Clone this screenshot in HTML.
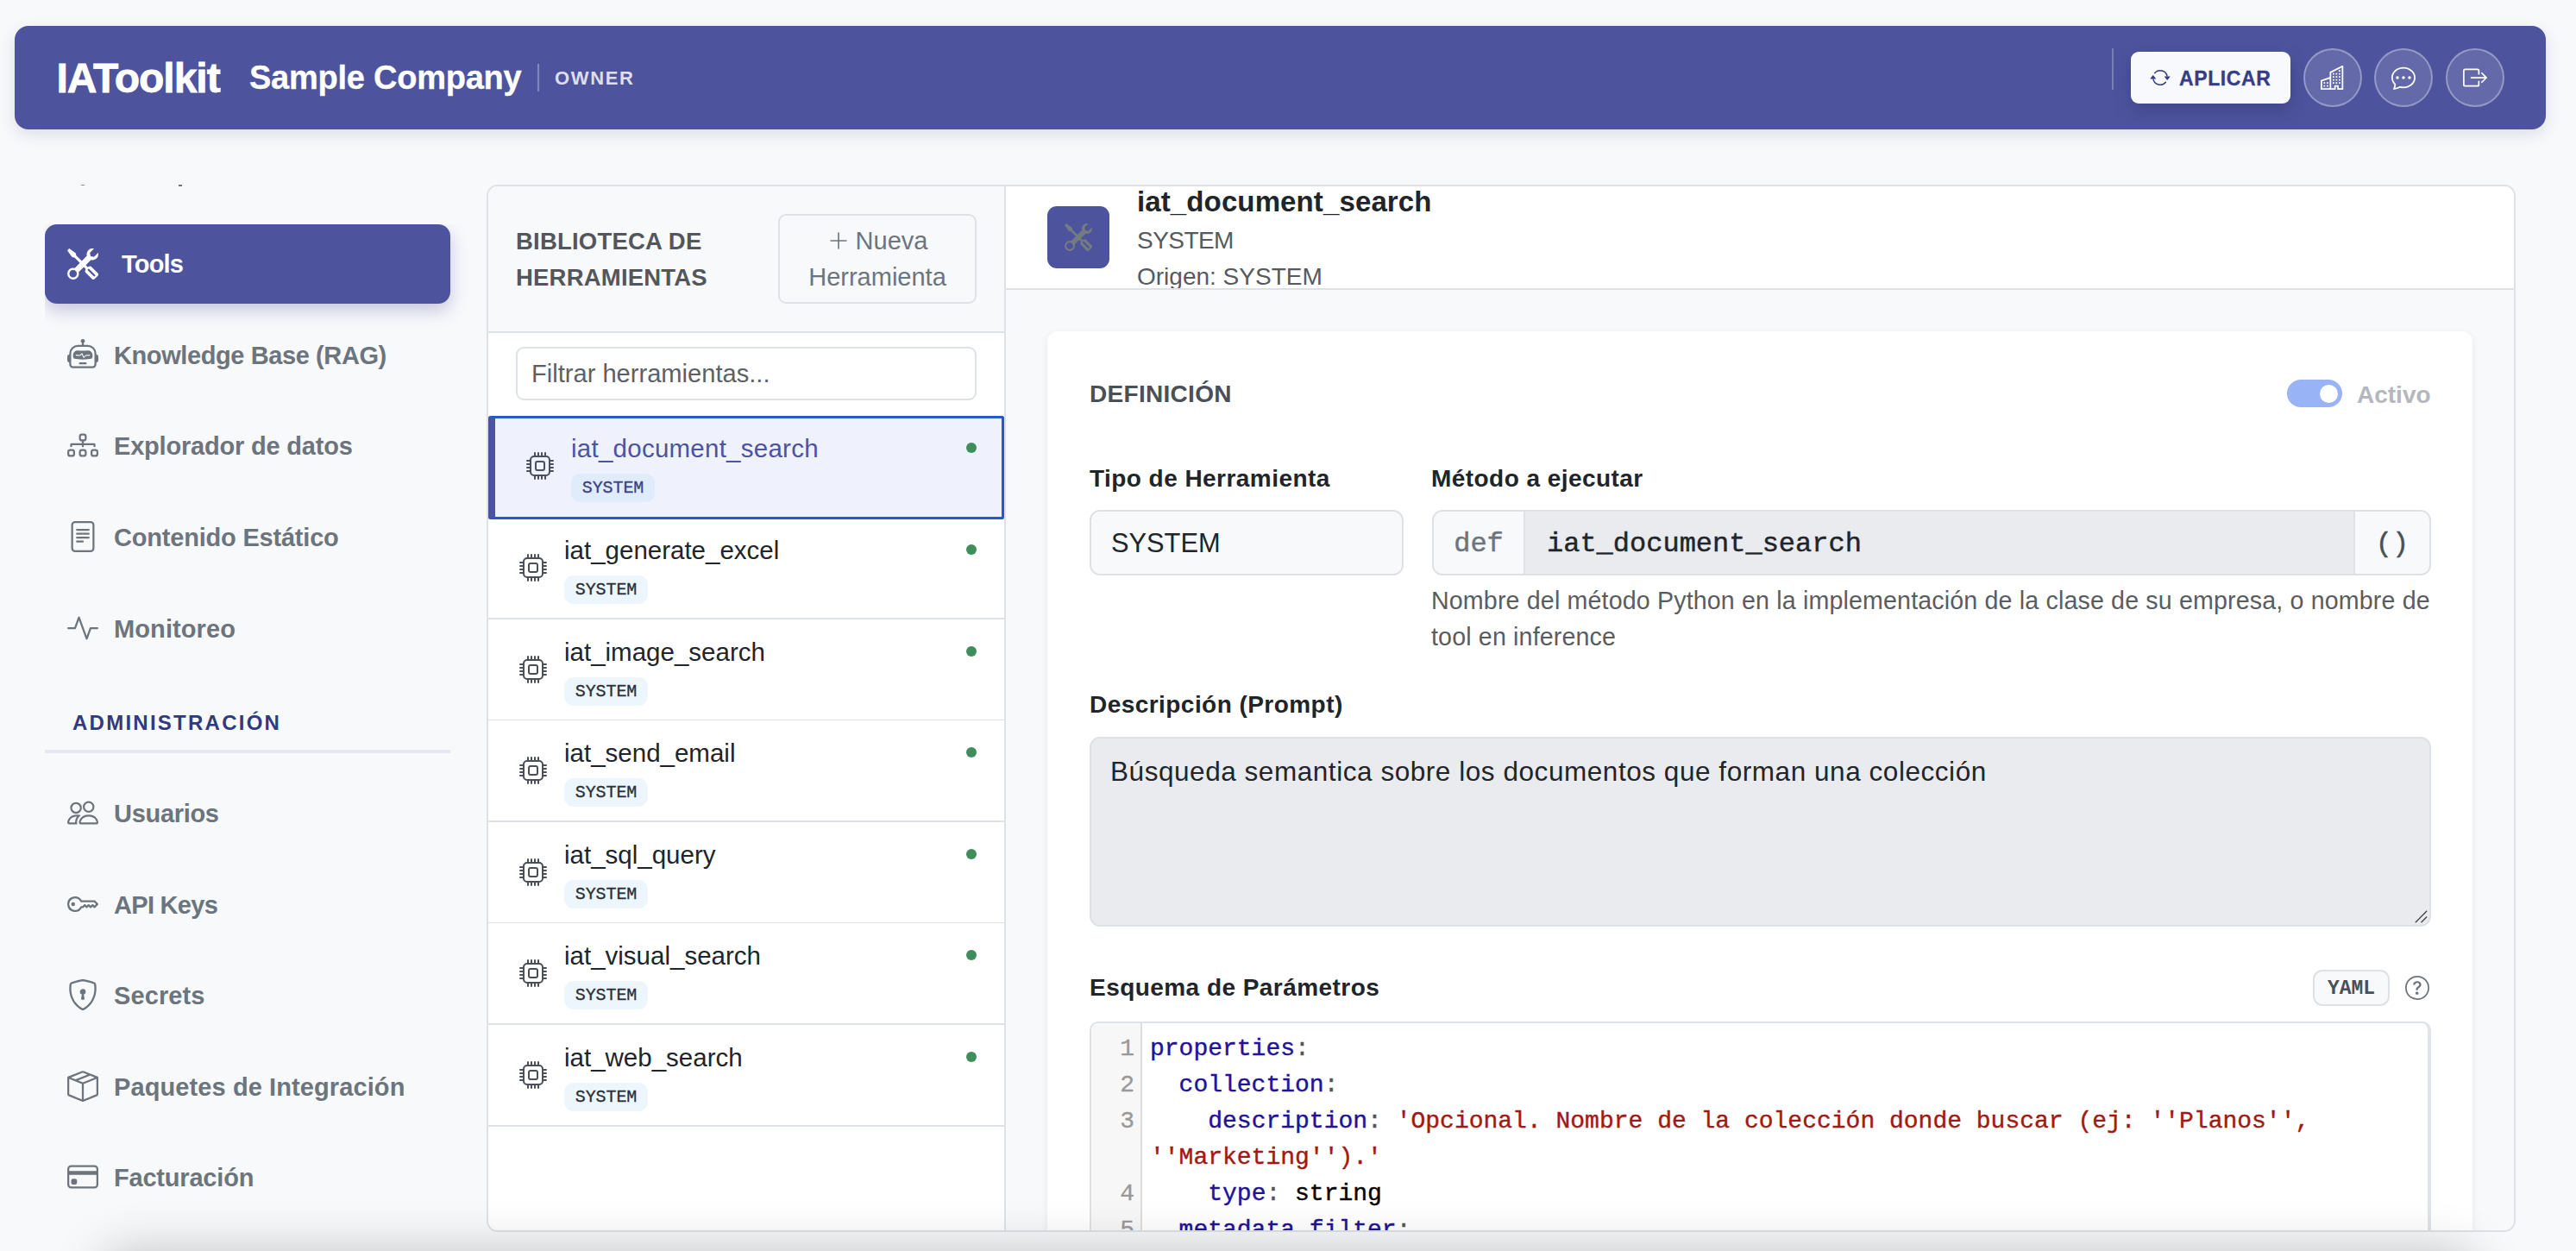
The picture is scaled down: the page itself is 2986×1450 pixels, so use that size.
<!DOCTYPE html>
<html lang="es">
<head>
<meta charset="utf-8">
<title>IAToolkit - Tools</title>
<style>
*{box-sizing:border-box;margin:0;padding:0}
html,body{width:2986px;height:1450px;overflow:hidden}
body{background:#f8f9fb;font-family:"Liberation Sans",sans-serif;color:#212529;position:relative}
.abs{position:absolute}
svg{display:block}
.mono{font-family:"Liberation Mono",monospace;-webkit-text-stroke:.45px currentColor}

/* ---------- top header ---------- */
#hdr{position:absolute;left:17px;top:30px;width:2934px;height:120px;background:#4d549d;border-radius:16px;box-shadow:0 6px 18px rgba(40,46,110,.13)}
#brand{position:absolute;left:65.5px;top:61px;font-size:48px;font-weight:700;color:#fff;line-height:60px;letter-spacing:-1px;-webkit-text-stroke:.8px #fff;white-space:nowrap}
#company{position:absolute;left:289px;top:60px;font-size:38px;font-weight:700;color:#fff;-webkit-text-stroke:.3px #fff;line-height:60px;letter-spacing:-.25px;white-space:nowrap}
#hdiv1{position:absolute;left:623px;top:74px;width:2px;height:32px;background:rgba(255,255,255,.3)}
#role{position:absolute;left:643px;top:60px;font-size:22px;font-weight:700;color:rgba(255,255,255,.82);line-height:62px;letter-spacing:1.65px;white-space:nowrap}
#hdiv2{position:absolute;left:2448px;top:56px;width:2px;height:48px;background:rgba(255,255,255,.25)}
#apply{position:absolute;left:2470px;top:60px;width:185px;height:60px;background:#f8f9fc;border-radius:9px;box-shadow:0 8px 20px rgba(30,35,90,.28)}
#apply svg{position:absolute;left:22px;top:18px;width:24px;height:24px;fill:#353d86}
#apply span{position:absolute;left:56px;top:1px;line-height:60px;font-size:23px;font-weight:700;color:#353d86;-webkit-text-stroke:.3px #353d86;letter-spacing:.6px}
.circ{position:absolute;top:56px;width:68px;height:68px;border-radius:50%;background:rgba(255,255,255,.13);border:2px solid rgba(255,255,255,.32)}
.circ svg{position:absolute;left:18px;top:18px;width:28px;height:28px;fill:#fff}

/* ---------- sidebar ---------- */
.nav{position:absolute;left:52px;width:470px;height:92px;border-radius:14px;color:#6c757d;font-weight:700;font-size:29px;white-space:nowrap}
.nav svg{position:absolute;left:26px;top:28px;width:36px;height:36px;fill:#6c757d}
.nav span{position:absolute;left:80px;top:1px;line-height:92px;letter-spacing:.1px}
.nav.on{background:#4d549d;color:#fff;box-shadow:0 8px 20px rgba(77,84,157,.3);clip-path:inset(0 -50px -50px 0)}
.nav.on svg{fill:#fff;left:26px;top:28px;width:36px;height:36px}
.nav.on span{left:89px;top:0}
#admin{position:absolute;left:84px;top:820px;font-size:24px;font-weight:700;color:#2f3a80;letter-spacing:2.25px;line-height:36px}
#adminline{position:absolute;left:52px;top:869px;width:470px;height:4px;background:#e6e8f1}
</style>
</head>
<body>

<!-- ======= HEADER ======= -->
<div id="hdr"></div>
<div id="brand">IAToolkit</div>
<div id="company">Sample Company</div>
<div id="hdiv1"></div>
<div id="role">OWNER</div>
<div id="hdiv2"></div>
<div id="apply">
  <svg viewBox="0 0 16 16"><path d="M11.534 7h3.932a.25.25 0 0 1 .192.41l-1.966 2.36a.25.25 0 0 1-.384 0l-1.966-2.36a.25.25 0 0 1 .192-.41m-11 2h3.932a.25.25 0 0 0 .192-.41L2.692 6.23a.25.25 0 0 0-.384 0L.342 8.59A.25.25 0 0 0 .534 9"/><path fill-rule="evenodd" d="M8 3c-1.552 0-2.94.707-3.857 1.818a.5.5 0 1 1-.771-.636A6.002 6.002 0 0 1 13.917 7H12.9A5 5 0 0 0 8 3M3.1 9a5.002 5.002 0 0 0 8.757 2.182.5.5 0 1 1 .771.636A6.002 6.002 0 0 1 2.083 9z"/></svg>
  <span>APLICAR</span>
</div>
<div class="circ" style="left:2670px"><svg viewBox="0 0 16 16"><path d="M14.763.075A.5.5 0 0 1 15 .5v15a.5.5 0 0 1-.5.5h-3a.5.5 0 0 1-.5-.5V14h-1v1.5a.5.5 0 0 1-.5.5h-9a.5.5 0 0 1-.5-.5V10a.5.5 0 0 1 .342-.474L6 7.64V4.5a.5.5 0 0 1 .276-.447l8-4a.5.5 0 0 1 .487.022M6 8.694 1 10.36V15h5zM7 15h2v-1.5a.5.5 0 0 1 .5-.5h2a.5.5 0 0 1 .5.5V15h2V1.309l-7 3.5z"/><path d="M2 11h1v1H2zm2 0h1v1H4zm-2 2h1v1H2zm2 0h1v1H4zm4-4h1v1H8zm2 0h1v1h-1zm-2 2h1v1H8zm2 0h1v1h-1zm2-2h1v1h-1zm0 2h1v1h-1zM8 7h1v1H8zm2 0h1v1h-1zm2 0h1v1h-1zM8 5h1v1H8zm2 0h1v1h-1zm2 0h1v1h-1zm0-2h1v1h-1z"/></svg></div>
<div class="circ" style="left:2752px"><svg viewBox="0 0 16 16"><path d="M5 8a1 1 0 1 1-2 0 1 1 0 0 1 2 0m4 0a1 1 0 1 1-2 0 1 1 0 0 1 2 0m3 1a1 1 0 1 0 0-2 1 1 0 0 0 0 2"/><path d="m2.165 15.803.02-.004c1.83-.363 2.948-.842 3.468-1.105A9 9 0 0 0 8 15c4.418 0 8-3.134 8-7s-3.582-7-8-7-8 3.134-8 7c0 1.76.743 3.37 1.97 4.6a10.4 10.4 0 0 1-.524 2.318l-.003.011a11 11 0 0 1-.244.637c-.079.186.074.394.273.362a22 22 0 0 0 .693-.125m.8-3.108a1 1 0 0 0-.287-.801C1.618 10.83 1 9.468 1 8c0-3.192 3.004-6 7-6s7 2.808 7 6-3.004 6-7 6a8 8 0 0 1-2.088-.272 1 1 0 0 0-.711.074c-.387.196-1.24.57-2.634.893a11 11 0 0 0 .398-2"/></svg></div>
<div class="circ" style="left:2835px"><svg viewBox="0 0 16 16"><path fill-rule="evenodd" d="M10 12.5a.5.5 0 0 1-.5.5h-8a.5.5 0 0 1-.5-.5v-9a.5.5 0 0 1 .5-.5h8a.5.5 0 0 1 .5.5v2a.5.5 0 0 0 1 0v-2A1.5 1.5 0 0 0 9.5 2h-8A1.5 1.5 0 0 0 0 3.5v9A1.5 1.5 0 0 0 1.5 14h8a1.5 1.5 0 0 0 1.5-1.5v-2a.5.5 0 0 0-1 0z"/><path fill-rule="evenodd" d="M15.854 8.354a.5.5 0 0 0 0-.708l-3-3a.5.5 0 0 0-.708.708L14.293 7.5H5.5a.5.5 0 0 0 0 1h8.793l-2.147 2.146a.5.5 0 0 0 .708.708z"/></svg></div>

<!-- ======= SIDEBAR ======= -->
<div id="n_tools" class="nav on" style="top:260px"><svg viewBox="0 0 16 16"><path d="M1 0 0 1l2.2 3.081a1 1 0 0 0 .815.419h.07a1 1 0 0 1 .708.293l2.675 2.675-2.617 2.654A3.003 3.003 0 0 0 0 13a3 3 0 1 0 5.878-.851l2.654-2.617.968.968-.305.914a1 1 0 0 0 .242 1.023l3.27 3.27a.997.997 0 0 0 1.414 0l1.586-1.586a.997.997 0 0 0 0-1.414l-3.27-3.27a1 1 0 0 0-1.023-.242L10.5 9.5l-.96-.96 2.68-2.643A3.005 3.005 0 0 0 16 3q0-.405-.102-.777l-2.14 2.141L12 4l-.364-1.757L13.777.102a3 3 0 0 0-3.675 3.68L7.462 6.46 4.793 3.793a1 1 0 0 1-.293-.707v-.071a1 1 0 0 0-.419-.814zm9.646 10.646a.5.5 0 0 1 .708 0l2.914 2.915a.5.5 0 0 1-.707.707l-2.915-2.914a.5.5 0 0 1 0-.708M3 11l.471.242.529.026.287.445.445.287.026.529L5 13l-.242.471-.026.529-.445.287-.287.445-.529.026L3 15l-.471-.242L2 14.732l-.287-.445L1.268 14l-.026-.529L1 13l.242-.471.026-.529.445-.287.287-.445.529-.026z"/></svg><span style="letter-spacing:-0.8px">Tools</span></div>

<div id="n_kb" class="nav" style="top:365px"><svg viewBox="0 0 16 16"><path d="M6 12.5a.5.5 0 0 1 .5-.5h3a.5.5 0 0 1 0 1h-3a.5.5 0 0 1-.5-.5M3 8.062C3 6.76 4.235 5.765 5.53 5.886a26.6 26.6 0 0 0 4.94 0C11.765 5.765 13 6.76 13 8.062v1.157a.93.93 0 0 1-.765.935c-.845.147-2.34.346-4.235.346s-3.39-.2-4.235-.346A.93.93 0 0 1 3 9.219zm4.542-.827a.25.25 0 0 0-.217.068l-.92.9a25 25 0 0 1-1.871-.183.25.25 0 0 0-.068.495c.55.076 1.232.149 2.02.193a.25.25 0 0 0 .189-.071l.754-.736.847 1.71a.25.25 0 0 0 .404.062l.932-.97a25 25 0 0 0 1.922-.188.25.25 0 0 0-.068-.495c-.538.074-1.207.145-1.98.189a.25.25 0 0 0-.166.076l-.754.785-.842-1.7a.25.25 0 0 0-.182-.135"/><path d="M8.5 1.866a1 1 0 1 0-1 0V3h-2A4.5 4.5 0 0 0 1 7.5V8a1 1 0 0 0-1 1v2a1 1 0 0 0 1 1v1a2 2 0 0 0 2 2h10a2 2 0 0 0 2-2v-1a1 1 0 0 0 1-1V9a1 1 0 0 0-1-1v-.5A4.5 4.5 0 0 0 10.5 3h-2zM14 7.5V13a1 1 0 0 1-1 1H3a1 1 0 0 1-1-1V7.5A3.5 3.5 0 0 1 5.5 4h5A3.5 3.5 0 0 1 14 7.5"/></svg><span style="letter-spacing:-0.4px">Knowledge Base (RAG)</span></div>

<div id="n_expl" class="nav" style="top:470px"><svg viewBox="0 0 16 16"><path fill-rule="evenodd" d="M6 3.5A1.5 1.5 0 0 1 7.5 2h1A1.5 1.5 0 0 1 10 3.5v1A1.5 1.5 0 0 1 8.5 6v1H14a.5.5 0 0 1 .5.5v1a.5.5 0 0 1-1 0V8h-5v.5a.5.5 0 0 1-1 0V8h-5v.5a.5.5 0 0 1-1 0v-1A.5.5 0 0 1 2 7h5.5V6A1.5 1.5 0 0 1 6 4.5zM8.5 5a.5.5 0 0 0 .5-.5v-1a.5.5 0 0 0-.5-.5h-1a.5.5 0 0 0-.5.5v1a.5.5 0 0 0 .5.5zM0 11.5A1.5 1.5 0 0 1 1.5 10h1A1.5 1.5 0 0 1 4 11.5v1A1.5 1.5 0 0 1 2.5 14h-1A1.5 1.5 0 0 1 0 12.5zm1.5-.5a.5.5 0 0 0-.5.5v1a.5.5 0 0 0 .5.5h1a.5.5 0 0 0 .5-.5v-1a.5.5 0 0 0-.5-.5zm4.5.5A1.5 1.5 0 0 1 7.5 10h1a1.5 1.5 0 0 1 1.5 1.5v1A1.5 1.5 0 0 1 8.5 14h-1A1.5 1.5 0 0 1 6 12.5zm1.5-.5a.5.5 0 0 0-.5.5v1a.5.5 0 0 0 .5.5h1a.5.5 0 0 0 .5-.5v-1a.5.5 0 0 0-.5-.5zm4.5.5a1.5 1.5 0 0 1 1.5-1.5h1a1.5 1.5 0 0 1 1.5 1.5v1a1.5 1.5 0 0 1-1.5 1.5h-1a1.5 1.5 0 0 1-1.5-1.5zm1.5-.5a.5.5 0 0 0-.5.5v1a.5.5 0 0 0 .5.5h1a.5.5 0 0 0 .5-.5v-1a.5.5 0 0 0-.5-.5z"/></svg><span style="letter-spacing:-0.2px">Explorador de datos</span></div>

<div id="n_cont" class="nav" style="top:576px"><svg viewBox="0 0 16 16"><path d="M5 4a.5.5 0 0 0 0 1h6a.5.5 0 0 0 0-1zm-.5 2.5A.5.5 0 0 1 5 6h6a.5.5 0 0 1 0 1H5a.5.5 0 0 1-.5-.5M5 8a.5.5 0 0 0 0 1h6a.5.5 0 0 0 0-1zm0 2a.5.5 0 0 0 0 1h3a.5.5 0 0 0 0-1z"/><path d="M2 2a2 2 0 0 1 2-2h8a2 2 0 0 1 2 2v12a2 2 0 0 1-2 2H4a2 2 0 0 1-2-2zm10-1H4a1 1 0 0 0-1 1v12a1 1 0 0 0 1 1h8a1 1 0 0 0 1-1V2a1 1 0 0 0-1-1"/></svg><span style="letter-spacing:-0.2px">Contenido Estático</span></div>

<div id="n_mon" class="nav" style="top:682px"><svg viewBox="0 0 16 16"><path fill-rule="evenodd" d="M6 2a.5.5 0 0 1 .47.33L10 12.036l1.53-4.208A.5.5 0 0 1 12 7.5h3.5a.5.5 0 0 1 0 1h-3.15l-1.88 5.17a.5.5 0 0 1-.94 0L6 3.964 4.47 8.171A.5.5 0 0 1 4 8.5H.5a.5.5 0 0 1 0-1h3.15l1.88-5.17A.5.5 0 0 1 6 2"/></svg><span>Monitoreo</span></div>

<div id="admin">ADMINISTRACIÓN</div>
<div id="adminline"></div>

<div id="n_usr" class="nav" style="top:896px"><svg viewBox="0 0 16 16"><path d="M15 14s1 0 1-1-1-4-5-4-5 3-5 4 1 1 1 1zm-7.978-1L7 12.996c.001-.264.167-1.03.76-1.72C8.312 10.629 9.282 10 11 10c1.717 0 2.687.63 3.24 1.276.593.69.758 1.457.76 1.72l-.008.002-.014.002zM11 7a2 2 0 1 0 0-4 2 2 0 0 0 0 4m3-2a3 3 0 1 1-6 0 3 3 0 0 1 6 0M6.936 9.28a6 6 0 0 0-1.23-.247A7 7 0 0 0 5 9c-4 0-5 3-5 4q0 1 1 1h4.216A2.24 2.24 0 0 1 5 13c0-1.01.377-2.042 1.09-2.904.243-.294.526-.569.846-.816M4.92 10A5.5 5.5 0 0 0 4 13H1c0-.26.164-1.03.76-1.724.545-.636 1.492-1.256 3.16-1.275ZM1.5 5.5a3 3 0 1 1 6 0 3 3 0 0 1-6 0m3-2a2 2 0 1 0 0 4 2 2 0 0 0 0-4"/></svg><span style="letter-spacing:-0.3px">Usuarios</span></div>

<div id="n_api" class="nav" style="top:1002px"><svg viewBox="0 0 16 16"><path d="M0 8a4 4 0 0 1 7.465-2H14a.5.5 0 0 1 .354.146l1.5 1.5a.5.5 0 0 1 0 .708l-1.5 1.5a.5.5 0 0 1-.708 0L13 9.207l-.646.647a.5.5 0 0 1-.708 0L11 9.207l-.646.647a.5.5 0 0 1-.708 0L9 9.207l-.646.647A.5.5 0 0 1 8 10h-.535A4 4 0 0 1 0 8m4-3a3 3 0 1 0 2.712 4.285A.5.5 0 0 1 7.163 9h.63l.853-.854a.5.5 0 0 1 .708 0l.646.647.646-.647a.5.5 0 0 1 .708 0l.646.647.646-.647a.5.5 0 0 1 .708 0l.646.647.793-.793-1-1h-6.63a.5.5 0 0 1-.451-.285A3 3 0 0 0 4 5"/><path d="M4 8a1 1 0 1 1-2 0 1 1 0 0 1 2 0"/></svg><span style="letter-spacing:-0.7px">API Keys</span></div>

<div id="n_sec" class="nav" style="top:1107px"><svg viewBox="0 0 16 16"><path d="M5.338 1.59a61 61 0 0 0-2.837.856.48.48 0 0 0-.328.39c-.554 4.157.726 7.19 2.253 9.188a10.7 10.7 0 0 0 2.287 2.233c.346.244.652.42.893.533q.18.085.293.118a1 1 0 0 0 .101.025 1 1 0 0 0 .1-.025q.114-.034.294-.118c.24-.113.547-.29.893-.533a10.7 10.7 0 0 0 2.287-2.233c1.527-1.997 2.807-5.031 2.253-9.188a.48.48 0 0 0-.328-.39c-.651-.213-1.75-.56-2.837-.855C9.552 1.29 8.531 1.067 8 1.067c-.53 0-1.552.223-2.662.524zM5.072.56C6.157.265 7.31 0 8 0s1.843.265 2.928.56c1.11.3 2.229.655 2.887.87a1.54 1.54 0 0 1 1.044 1.262c.596 4.477-.787 7.795-2.465 9.99a11.8 11.8 0 0 1-2.517 2.453 7 7 0 0 1-1.048.625c-.28.132-.581.24-.829.24s-.548-.108-.829-.24a7 7 0 0 1-1.048-.625 11.8 11.8 0 0 1-2.517-2.453C1.928 10.487.545 7.169 1.141 2.692A1.54 1.54 0 0 1 2.185 1.43 63 63 0 0 1 5.072.56"/><path d="M9.5 6.5a1.5 1.5 0 0 1-1 1.415l.385 1.99a.5.5 0 0 1-.491.595h-.788a.5.5 0 0 1-.49-.595l.384-1.99a1.5 1.5 0 1 1 2-1.415"/></svg><span>Secrets</span></div>

<div id="n_paq" class="nav" style="top:1213px"><svg viewBox="0 0 16 16"><path d="M8.186 1.113a.5.5 0 0 0-.372 0L1.846 3.5l2.404.961L10.404 2zm3.564 1.426L5.596 5 8 5.961 14.154 3.5zm3.25 1.7-6.5 2.6v7.922l6.5-2.6V4.24zM7.5 14.762V6.838L1 4.239v7.923zM7.443.184a1.5 1.5 0 0 1 1.114 0l7.129 2.852A.5.5 0 0 1 16 3.5v8.662a1 1 0 0 1-.629.928l-7.185 2.874a.5.5 0 0 1-.372 0L.63 13.09a1 1 0 0 1-.63-.928V3.5a.5.5 0 0 1 .314-.464z"/></svg><span>Paquetes de Integración</span></div>

<div id="n_fac" class="nav" style="top:1318px"><svg viewBox="0 0 16 16"><path d="M0 4a2 2 0 0 1 2-2h12a2 2 0 0 1 2 2v8a2 2 0 0 1-2 2H2a2 2 0 0 1-2-2zm2-1a1 1 0 0 0-1 1v1h14V4a1 1 0 0 0-1-1zm13 4H1v5a1 1 0 0 0 1 1h12a1 1 0 0 0 1-1z"/><path d="M2 10a1 1 0 0 1 1-1h1a1 1 0 0 1 1 1v1a1 1 0 0 1-1 1H3a1 1 0 0 1-1-1z"/></svg><span style="letter-spacing:-0.2px">Facturación</span></div>

<!-- ======= MAIN ======= -->
<style>
/* ---------- main container ---------- */
#wrap{position:absolute;left:564px;top:214px;width:2352px;height:1214px;border:2px solid #dee2e6;border-radius:13px;background:#f8f9fa;overflow:hidden}
#lhead{position:absolute;left:0;top:0;width:598px;height:170px;background:#f8f9fa;border-bottom:2px solid #dee2e6}
#lbody{position:absolute;left:0;top:170px;width:598px;height:1045px;background:#fff}
#vsep{position:absolute;left:598px;top:0;width:2px;height:1215px;background:#dee2e6}
#ltitle{position:absolute;left:32px;top:43px;font-size:27.5px;font-weight:700;color:#53575c;line-height:42px;letter-spacing:.2px;white-space:nowrap}
#newbtn{position:absolute;left:336px;top:32px;width:230px;height:104px;border:2px solid #dee2e6;border-radius:9px;color:#6c757d;font-size:29px;line-height:42px;text-align:center;padding-top:8px;white-space:nowrap}
#newbtn svg{display:inline-block;width:26px;height:26px;fill:#6c757d;vertical-align:-3px;margin-right:7px}
#filter{position:absolute;left:32px;top:186px;width:534px;height:62px;border:2px solid #dee2e6;border-radius:9px;background:#fff;font-size:29.1px;line-height:58px;padding-left:16px;color:#5d6166;white-space:nowrap}
.it{position:absolute;left:0;width:598px;height:118px;border-bottom:2px solid #dee2e6;background:#fff}
.it svg{position:absolute;left:36px;top:42px;width:32px;height:32px;fill:#495057}
.it .nm{position:absolute;left:88px;top:16px;font-size:29.5px;line-height:44px;color:#212529;white-space:nowrap}
.it .bd{position:absolute;left:88px;top:67px;width:97px;height:33px;border-radius:11px;background:#ecf6fc;font-family:"Liberation Mono",monospace;font-size:20px;line-height:34px;-webkit-text-stroke:.3px currentColor;text-align:center;color:#2b3035;letter-spacing:-.1px}
.it .dot{position:absolute;left:554px;top:31px;width:12px;height:12px;border-radius:50%;background:#3e8e5c}
.it.sel{background:#eff1fd;border:3px solid #2759cd;border-left:8px solid #4d549d;border-radius:3px;height:120px;z-index:2}

.it.sel svg{left:36px;top:39px}
.it.sel .nm{left:88px;top:13px;color:#4d549d;letter-spacing:.25px}
.it.sel .bd{left:88px;top:64px;background:#e0ecfb;color:#3a4185}
.it.sel .dot{left:546px;top:28px}

/* ---------- right detail ---------- */
#rhead{position:absolute;left:600px;top:0;width:1750px;height:120px;background:#fff;border-bottom:2px solid #dee2e6;overflow:hidden}
#tile{position:absolute;left:48px;top:23px;width:72px;height:72px;border-radius:11px;background:#4d549d}
#tile svg{position:absolute;left:20px;top:20px;width:32px;height:32px;fill:#747b81}
#rtitle{position:absolute;left:152px;top:-6px;font-size:33px;font-weight:700;line-height:48px;color:#212529;white-space:nowrap;letter-spacing:.12px}
#rsub1{position:absolute;left:152px;top:42px;font-size:28px;line-height:42px;color:#565a5e;white-space:nowrap;letter-spacing:-.55px}
#rsub2{position:absolute;left:152px;top:84px;font-size:28px;line-height:42px;color:#565a5e;white-space:nowrap}
#cin{position:absolute;left:0;top:1px;width:100%;height:100%}
#card{position:absolute;left:648px;top:168px;width:1652px;height:1100px;background:#fff;border-radius:12px;box-shadow:0 2px 8px rgba(0,0,0,.07)}
.lbl{position:absolute;font-size:28px;font-weight:700;line-height:42px;color:#212529;white-space:nowrap;letter-spacing:.45px}
.box{position:absolute;border:2px solid #dee2e6;border-radius:12px}
</style>
<div id="wrap">
  <div id="lhead">
    <div id="ltitle">BIBLIOTECA DE<br>HERRAMIENTAS</div>
    <div id="newbtn"><svg viewBox="0 0 16 16"><path fill-rule="evenodd" d="M8 2a.5.5 0 0 1 .5.5v5h5a.5.5 0 0 1 0 1h-5v5a.5.5 0 0 1-1 0v-5h-5a.5.5 0 0 1 0-1h5v-5A.5.5 0 0 1 8 2"/></svg>Nueva<br>Herramienta</div>
  </div>
  <div id="lbody"></div>
  <div id="filter">Filtrar herramientas...</div>
    <div id="it0" class="it sel" style="top:266px"><svg viewBox="0 0 16 16"><path d="M5 0a.5.5 0 0 1 .5.5V2h1V.5a.5.5 0 0 1 1 0V2h1V.5a.5.5 0 0 1 1 0V2h1V.5a.5.5 0 0 1 1 0V2A2.5 2.5 0 0 1 14 4.5h1.5a.5.5 0 0 1 0 1H14v1h1.5a.5.5 0 0 1 0 1H14v1h1.5a.5.5 0 0 1 0 1H14v1h1.5a.5.5 0 0 1 0 1H14a2.5 2.5 0 0 1-2.5 2.5v1.5a.5.5 0 0 1-1 0V14h-1v1.5a.5.5 0 0 1-1 0V14h-1v1.5a.5.5 0 0 1-1 0V14h-1v1.5a.5.5 0 0 1-1 0V14A2.5 2.5 0 0 1 2 11.5H.5a.5.5 0 0 1 0-1H2v-1H.5a.5.5 0 0 1 0-1H2v-1H.5a.5.5 0 0 1 0-1H2v-1H.5a.5.5 0 0 1 0-1H2A2.5 2.5 0 0 1 4.5 2V.5A.5.5 0 0 1 5 0m-.5 3A1.5 1.5 0 0 0 3 4.5v7A1.5 1.5 0 0 0 4.5 13h7a1.5 1.5 0 0 0 1.5-1.5v-7A1.5 1.5 0 0 0 11.5 3zM5 6.5A1.5 1.5 0 0 1 6.5 5h3A1.5 1.5 0 0 1 11 6.5v3A1.5 1.5 0 0 1 9.5 11h-3A1.5 1.5 0 0 1 5 9.5zM6.5 6a.5.5 0 0 0-.5.5v3a.5.5 0 0 0 .5.5h3a.5.5 0 0 0 .5-.5v-3a.5.5 0 0 0-.5-.5z"/></svg><div class="nm">iat_document_search</div><div class="bd">SYSTEM</div><div class="dot"></div></div>
  <div id="it1" class="it" style="top:384px"><svg viewBox="0 0 16 16"><path d="M5 0a.5.5 0 0 1 .5.5V2h1V.5a.5.5 0 0 1 1 0V2h1V.5a.5.5 0 0 1 1 0V2h1V.5a.5.5 0 0 1 1 0V2A2.5 2.5 0 0 1 14 4.5h1.5a.5.5 0 0 1 0 1H14v1h1.5a.5.5 0 0 1 0 1H14v1h1.5a.5.5 0 0 1 0 1H14v1h1.5a.5.5 0 0 1 0 1H14a2.5 2.5 0 0 1-2.5 2.5v1.5a.5.5 0 0 1-1 0V14h-1v1.5a.5.5 0 0 1-1 0V14h-1v1.5a.5.5 0 0 1-1 0V14h-1v1.5a.5.5 0 0 1-1 0V14A2.5 2.5 0 0 1 2 11.5H.5a.5.5 0 0 1 0-1H2v-1H.5a.5.5 0 0 1 0-1H2v-1H.5a.5.5 0 0 1 0-1H2v-1H.5a.5.5 0 0 1 0-1H2A2.5 2.5 0 0 1 4.5 2V.5A.5.5 0 0 1 5 0m-.5 3A1.5 1.5 0 0 0 3 4.5v7A1.5 1.5 0 0 0 4.5 13h7a1.5 1.5 0 0 0 1.5-1.5v-7A1.5 1.5 0 0 0 11.5 3zM5 6.5A1.5 1.5 0 0 1 6.5 5h3A1.5 1.5 0 0 1 11 6.5v3A1.5 1.5 0 0 1 9.5 11h-3A1.5 1.5 0 0 1 5 9.5zM6.5 6a.5.5 0 0 0-.5.5v3a.5.5 0 0 0 .5.5h3a.5.5 0 0 0 .5-.5v-3a.5.5 0 0 0-.5-.5z"/></svg><div class="nm">iat_generate_excel</div><div class="bd">SYSTEM</div><div class="dot"></div></div>
  <div id="it2" class="it" style="top:501.5px"><svg viewBox="0 0 16 16"><path d="M5 0a.5.5 0 0 1 .5.5V2h1V.5a.5.5 0 0 1 1 0V2h1V.5a.5.5 0 0 1 1 0V2h1V.5a.5.5 0 0 1 1 0V2A2.5 2.5 0 0 1 14 4.5h1.5a.5.5 0 0 1 0 1H14v1h1.5a.5.5 0 0 1 0 1H14v1h1.5a.5.5 0 0 1 0 1H14v1h1.5a.5.5 0 0 1 0 1H14a2.5 2.5 0 0 1-2.5 2.5v1.5a.5.5 0 0 1-1 0V14h-1v1.5a.5.5 0 0 1-1 0V14h-1v1.5a.5.5 0 0 1-1 0V14h-1v1.5a.5.5 0 0 1-1 0V14A2.5 2.5 0 0 1 2 11.5H.5a.5.5 0 0 1 0-1H2v-1H.5a.5.5 0 0 1 0-1H2v-1H.5a.5.5 0 0 1 0-1H2v-1H.5a.5.5 0 0 1 0-1H2A2.5 2.5 0 0 1 4.5 2V.5A.5.5 0 0 1 5 0m-.5 3A1.5 1.5 0 0 0 3 4.5v7A1.5 1.5 0 0 0 4.5 13h7a1.5 1.5 0 0 0 1.5-1.5v-7A1.5 1.5 0 0 0 11.5 3zM5 6.5A1.5 1.5 0 0 1 6.5 5h3A1.5 1.5 0 0 1 11 6.5v3A1.5 1.5 0 0 1 9.5 11h-3A1.5 1.5 0 0 1 5 9.5zM6.5 6a.5.5 0 0 0-.5.5v3a.5.5 0 0 0 .5.5h3a.5.5 0 0 0 .5-.5v-3a.5.5 0 0 0-.5-.5z"/></svg><div class="nm">iat_image_search</div><div class="bd">SYSTEM</div><div class="dot"></div></div>
  <div id="it3" class="it" style="top:619px"><svg viewBox="0 0 16 16"><path d="M5 0a.5.5 0 0 1 .5.5V2h1V.5a.5.5 0 0 1 1 0V2h1V.5a.5.5 0 0 1 1 0V2h1V.5a.5.5 0 0 1 1 0V2A2.5 2.5 0 0 1 14 4.5h1.5a.5.5 0 0 1 0 1H14v1h1.5a.5.5 0 0 1 0 1H14v1h1.5a.5.5 0 0 1 0 1H14v1h1.5a.5.5 0 0 1 0 1H14a2.5 2.5 0 0 1-2.5 2.5v1.5a.5.5 0 0 1-1 0V14h-1v1.5a.5.5 0 0 1-1 0V14h-1v1.5a.5.5 0 0 1-1 0V14h-1v1.5a.5.5 0 0 1-1 0V14A2.5 2.5 0 0 1 2 11.5H.5a.5.5 0 0 1 0-1H2v-1H.5a.5.5 0 0 1 0-1H2v-1H.5a.5.5 0 0 1 0-1H2v-1H.5a.5.5 0 0 1 0-1H2A2.5 2.5 0 0 1 4.5 2V.5A.5.5 0 0 1 5 0m-.5 3A1.5 1.5 0 0 0 3 4.5v7A1.5 1.5 0 0 0 4.5 13h7a1.5 1.5 0 0 0 1.5-1.5v-7A1.5 1.5 0 0 0 11.5 3zM5 6.5A1.5 1.5 0 0 1 6.5 5h3A1.5 1.5 0 0 1 11 6.5v3A1.5 1.5 0 0 1 9.5 11h-3A1.5 1.5 0 0 1 5 9.5zM6.5 6a.5.5 0 0 0-.5.5v3a.5.5 0 0 0 .5.5h3a.5.5 0 0 0 .5-.5v-3a.5.5 0 0 0-.5-.5z"/></svg><div class="nm">iat_send_email</div><div class="bd">SYSTEM</div><div class="dot"></div></div>
  <div id="it4" class="it" style="top:736.5px"><svg viewBox="0 0 16 16"><path d="M5 0a.5.5 0 0 1 .5.5V2h1V.5a.5.5 0 0 1 1 0V2h1V.5a.5.5 0 0 1 1 0V2h1V.5a.5.5 0 0 1 1 0V2A2.5 2.5 0 0 1 14 4.5h1.5a.5.5 0 0 1 0 1H14v1h1.5a.5.5 0 0 1 0 1H14v1h1.5a.5.5 0 0 1 0 1H14v1h1.5a.5.5 0 0 1 0 1H14a2.5 2.5 0 0 1-2.5 2.5v1.5a.5.5 0 0 1-1 0V14h-1v1.5a.5.5 0 0 1-1 0V14h-1v1.5a.5.5 0 0 1-1 0V14h-1v1.5a.5.5 0 0 1-1 0V14A2.5 2.5 0 0 1 2 11.5H.5a.5.5 0 0 1 0-1H2v-1H.5a.5.5 0 0 1 0-1H2v-1H.5a.5.5 0 0 1 0-1H2v-1H.5a.5.5 0 0 1 0-1H2A2.5 2.5 0 0 1 4.5 2V.5A.5.5 0 0 1 5 0m-.5 3A1.5 1.5 0 0 0 3 4.5v7A1.5 1.5 0 0 0 4.5 13h7a1.5 1.5 0 0 0 1.5-1.5v-7A1.5 1.5 0 0 0 11.5 3zM5 6.5A1.5 1.5 0 0 1 6.5 5h3A1.5 1.5 0 0 1 11 6.5v3A1.5 1.5 0 0 1 9.5 11h-3A1.5 1.5 0 0 1 5 9.5zM6.5 6a.5.5 0 0 0-.5.5v3a.5.5 0 0 0 .5.5h3a.5.5 0 0 0 .5-.5v-3a.5.5 0 0 0-.5-.5z"/></svg><div class="nm">iat_sql_query</div><div class="bd">SYSTEM</div><div class="dot"></div></div>
  <div id="it5" class="it" style="top:854px"><svg viewBox="0 0 16 16"><path d="M5 0a.5.5 0 0 1 .5.5V2h1V.5a.5.5 0 0 1 1 0V2h1V.5a.5.5 0 0 1 1 0V2h1V.5a.5.5 0 0 1 1 0V2A2.5 2.5 0 0 1 14 4.5h1.5a.5.5 0 0 1 0 1H14v1h1.5a.5.5 0 0 1 0 1H14v1h1.5a.5.5 0 0 1 0 1H14v1h1.5a.5.5 0 0 1 0 1H14a2.5 2.5 0 0 1-2.5 2.5v1.5a.5.5 0 0 1-1 0V14h-1v1.5a.5.5 0 0 1-1 0V14h-1v1.5a.5.5 0 0 1-1 0V14h-1v1.5a.5.5 0 0 1-1 0V14A2.5 2.5 0 0 1 2 11.5H.5a.5.5 0 0 1 0-1H2v-1H.5a.5.5 0 0 1 0-1H2v-1H.5a.5.5 0 0 1 0-1H2v-1H.5a.5.5 0 0 1 0-1H2A2.5 2.5 0 0 1 4.5 2V.5A.5.5 0 0 1 5 0m-.5 3A1.5 1.5 0 0 0 3 4.5v7A1.5 1.5 0 0 0 4.5 13h7a1.5 1.5 0 0 0 1.5-1.5v-7A1.5 1.5 0 0 0 11.5 3zM5 6.5A1.5 1.5 0 0 1 6.5 5h3A1.5 1.5 0 0 1 11 6.5v3A1.5 1.5 0 0 1 9.5 11h-3A1.5 1.5 0 0 1 5 9.5zM6.5 6a.5.5 0 0 0-.5.5v3a.5.5 0 0 0 .5.5h3a.5.5 0 0 0 .5-.5v-3a.5.5 0 0 0-.5-.5z"/></svg><div class="nm">iat_visual_search</div><div class="bd">SYSTEM</div><div class="dot"></div></div>
  <div id="it6" class="it" style="top:971.5px"><svg viewBox="0 0 16 16"><path d="M5 0a.5.5 0 0 1 .5.5V2h1V.5a.5.5 0 0 1 1 0V2h1V.5a.5.5 0 0 1 1 0V2h1V.5a.5.5 0 0 1 1 0V2A2.5 2.5 0 0 1 14 4.5h1.5a.5.5 0 0 1 0 1H14v1h1.5a.5.5 0 0 1 0 1H14v1h1.5a.5.5 0 0 1 0 1H14v1h1.5a.5.5 0 0 1 0 1H14a2.5 2.5 0 0 1-2.5 2.5v1.5a.5.5 0 0 1-1 0V14h-1v1.5a.5.5 0 0 1-1 0V14h-1v1.5a.5.5 0 0 1-1 0V14h-1v1.5a.5.5 0 0 1-1 0V14A2.5 2.5 0 0 1 2 11.5H.5a.5.5 0 0 1 0-1H2v-1H.5a.5.5 0 0 1 0-1H2v-1H.5a.5.5 0 0 1 0-1H2v-1H.5a.5.5 0 0 1 0-1H2A2.5 2.5 0 0 1 4.5 2V.5A.5.5 0 0 1 5 0m-.5 3A1.5 1.5 0 0 0 3 4.5v7A1.5 1.5 0 0 0 4.5 13h7a1.5 1.5 0 0 0 1.5-1.5v-7A1.5 1.5 0 0 0 11.5 3zM5 6.5A1.5 1.5 0 0 1 6.5 5h3A1.5 1.5 0 0 1 11 6.5v3A1.5 1.5 0 0 1 9.5 11h-3A1.5 1.5 0 0 1 5 9.5zM6.5 6a.5.5 0 0 0-.5.5v3a.5.5 0 0 0 .5.5h3a.5.5 0 0 0 .5-.5v-3a.5.5 0 0 0-.5-.5z"/></svg><div class="nm">iat_web_search</div><div class="bd">SYSTEM</div><div class="dot"></div></div>
  <div id="vsep"></div>
  <div id="rhead">
    <div id="tile"><svg viewBox="0 0 16 16"><path d="M1 0 0 1l2.2 3.081a1 1 0 0 0 .815.419h.07a1 1 0 0 1 .708.293l2.675 2.675-2.617 2.654A3.003 3.003 0 0 0 0 13a3 3 0 1 0 5.878-.851l2.654-2.617.968.968-.305.914a1 1 0 0 0 .242 1.023l3.27 3.27a.997.997 0 0 0 1.414 0l1.586-1.586a.997.997 0 0 0 0-1.414l-3.27-3.27a1 1 0 0 0-1.023-.242L10.5 9.5l-.96-.96 2.68-2.643A3.005 3.005 0 0 0 16 3q0-.405-.102-.777l-2.14 2.141L12 4l-.364-1.757L13.777.102a3 3 0 0 0-3.675 3.68L7.462 6.46 4.793 3.793a1 1 0 0 1-.293-.707v-.071a1 1 0 0 0-.419-.814zm9.646 10.646a.5.5 0 0 1 .708 0l2.914 2.915a.5.5 0 0 1-.707.707l-2.915-2.914a.5.5 0 0 1 0-.708M3 11l.471.242.529.026.287.445.445.287.026.529L5 13l-.242.471-.026.529-.445.287-.287.445-.529.026L3 15l-.471-.242L2 14.732l-.287-.445L1.268 14l-.026-.529L1 13l.242-.471.026-.529.445-.287.287-.445.529-.026z"/></svg></div>
    <div id="rtitle">iat_document_search</div>
    <div id="rsub1">SYSTEM</div>
    <div id="rsub2">Origen: SYSTEM</div>
  </div>
  <div id="card"><div id="cin">
    <style>
#deft{position:absolute;left:49px;top:51px;font-size:28px;font-weight:700;line-height:42px;color:#495057;letter-spacing:.3px;white-space:nowrap}
#tog{position:absolute;left:1437px;top:55px;width:64px;height:32px;border-radius:16px;background:#99b3f7}
#tog:after{content:"";position:absolute;left:37.5px;top:5.5px;width:21px;height:21px;border-radius:50%;background:#fff}
#act{position:absolute;left:1518px;top:52px;font-size:28px;font-weight:700;line-height:42px;color:#b4b8bc;white-space:nowrap}
#sel{left:49px;top:206px;width:364px;height:76px;background:#f8f9fa;font-size:30.8px;line-height:74px;padding-left:23px;color:#212529}
#grp{left:446px;top:206px;width:1158px;height:76px;background:#eaebef;overflow:hidden}
#gdef{position:absolute;left:0;top:0;width:106px;height:72px;background:#f8f9fa;border-right:2px solid #dee2e6;font-size:32px;line-height:76px;text-align:center;color:#6c757d}
#gname{position:absolute;left:131px;top:0;font-size:32px;line-height:76px;color:#212529;white-space:nowrap}
#gpar{position:absolute;right:0;top:0;width:88px;height:72px;background:#f8f9fa;border-left:2px solid #dee2e6;font-size:32px;line-height:76px;text-align:center;color:#495057}
#help{position:absolute;left:445px;top:290px;font-size:28.6px;line-height:42px;color:#595d61;white-space:nowrap;letter-spacing:.16px}
#ta{left:49px;top:469px;width:1555px;height:220px;background:#eaebef}
#tatxt{position:absolute;left:22px;top:17px;font-size:31.5px;line-height:42px;color:#212529;white-space:nowrap;letter-spacing:.55px}
#tagrip{position:absolute;right:2px;bottom:2px;width:15px;height:15px}
#yaml{position:absolute;left:1467px;top:739px;width:89px;height:42px;border:2px solid #dee2e6;border-radius:11px;background:#f8f9fa;font-family:"Liberation Mono",monospace;font-weight:700;font-size:23px;line-height:41px;text-align:center;color:#495057}
#q{position:absolute;left:1574px;top:746px;width:28px;height:28px;fill:#6c757d}
#ed{position:absolute;left:49px;top:799px;width:1555px;height:320px;border:2px solid #dee2e6;border-right:4px solid #e1e3ea;border-radius:10px;background:#fff;overflow:hidden}
#gut{position:absolute;left:0;top:0;width:59px;height:100%;background:#f7f7f7;border-right:2px solid #dddddd}
.ln{position:absolute;left:0;width:50px;text-align:right;font-family:"Liberation Mono",monospace;font-size:28px;line-height:42px;color:#999;-webkit-text-stroke:.3px #999}
.cl{position:absolute;left:68px;font-family:"Liberation Mono",monospace;font-size:28px;line-height:42px;white-space:pre;color:#000;-webkit-text-stroke:.4px currentColor}
.k{color:#221199}.p{color:#555}.s{color:#a31812}
</style>
<div id="deft">DEFINICIÓN</div>
<div id="tog"></div>
<div id="act">Activo</div>
<div id="l1" class="lbl" style="left:49px;top:149px">Tipo de Herramienta</div>
<div id="l2" class="lbl" style="left:445px;top:149px">Método a ejecutar</div>
<div id="sel" class="box">SYSTEM</div>
<div id="grp" class="box">
  <div id="gdef" class="mono">def</div>
  <div id="gname" class="mono">iat_document_search</div>
  <div id="gpar" class="mono">()</div>
</div>
<div id="help">Nombre del método Python en la implementación de la clase de su empresa, o nombre de<br>tool en inference</div>
<div id="l3" class="lbl" style="left:49px;top:411px">Descripción (Prompt)</div>
<div id="ta" class="box">
  <div id="tatxt">Búsqueda semantica sobre los documentos que forman una colección</div>
  <svg id="tagrip" viewBox="0 0 18 18"><path d="M17 1 1 17M17 9l-8 8" stroke="#444" stroke-width="1.6" fill="none"/></svg>
</div>
<div id="l4" class="lbl" style="left:49px;top:739px">Esquema de Parámetros</div>
<div id="yaml">YAML</div>
<svg id="q" viewBox="0 0 16 16"><path d="M8 15A7 7 0 1 1 8 1a7 7 0 0 1 0 14m0 1A8 8 0 1 0 8 0a8 8 0 0 0 0 16"/><path d="M5.255 5.786a.237.237 0 0 0 .241.247h.825c.138 0 .248-.113.266-.25.09-.656.54-1.134 1.342-1.134.686 0 1.314.343 1.314 1.168 0 .635-.374.927-.965 1.371-.673.489-1.206 1.06-1.168 1.987l.003.217a.25.25 0 0 0 .25.246h.811a.25.25 0 0 0 .25-.25v-.105c0-.718.273-.927 1.01-1.486.609-.463 1.244-.977 1.244-2.056 0-1.511-1.276-2.241-2.673-2.241-1.267 0-2.655.59-2.75 2.286m1.557 5.763c0 .533.425.927 1.01.927.609 0 1.028-.394 1.028-.927 0-.552-.42-.94-1.029-.94-.584 0-1.009.388-1.009.94"/></svg>
<div id="ed">
  <div id="gut"></div>
  <div class="ln" style="top:9px">1</div>
  <div class="ln" style="top:51px">2</div>
  <div class="ln" style="top:93px">3</div>
  <div class="ln" style="top:177px">4</div>
  <div class="ln" style="top:219px">5</div>
  <div class="cl" style="top:9px"><span class="k">properties</span><span class="p">:</span></div>
  <div class="cl" style="top:51px">  <span class="k">collection</span><span class="p">:</span></div>
  <div class="cl" style="top:93px">    <span class="k">description</span><span class="p">:</span> <span class="s">'Opcional. Nombre de la colección donde buscar (ej: ''Planos'',</span></div>
  <div class="cl" style="top:135px"><span class="s">''Marketing'').'</span></div>
  <div class="cl" style="top:177px">    <span class="k">type</span><span class="p">:</span> string</div>
  <div class="cl" style="top:219px">  <span class="k">metadata_filter</span><span class="p">:</span></div>
</div>
</div>
  </div>
</div>


<div style="position:absolute;left:120px;top:1453px;width:2746px;height:120px;border-radius:20px;box-shadow:0 0 60px rgba(0,0,0,.24);z-index:50"></div>
<div style="position:absolute;left:94px;top:214px;width:4px;height:1px;background:#8a9096"></div>
<div style="position:absolute;left:207px;top:214px;width:4px;height:2px;background:#6c757d"></div>
</body>
</html>
